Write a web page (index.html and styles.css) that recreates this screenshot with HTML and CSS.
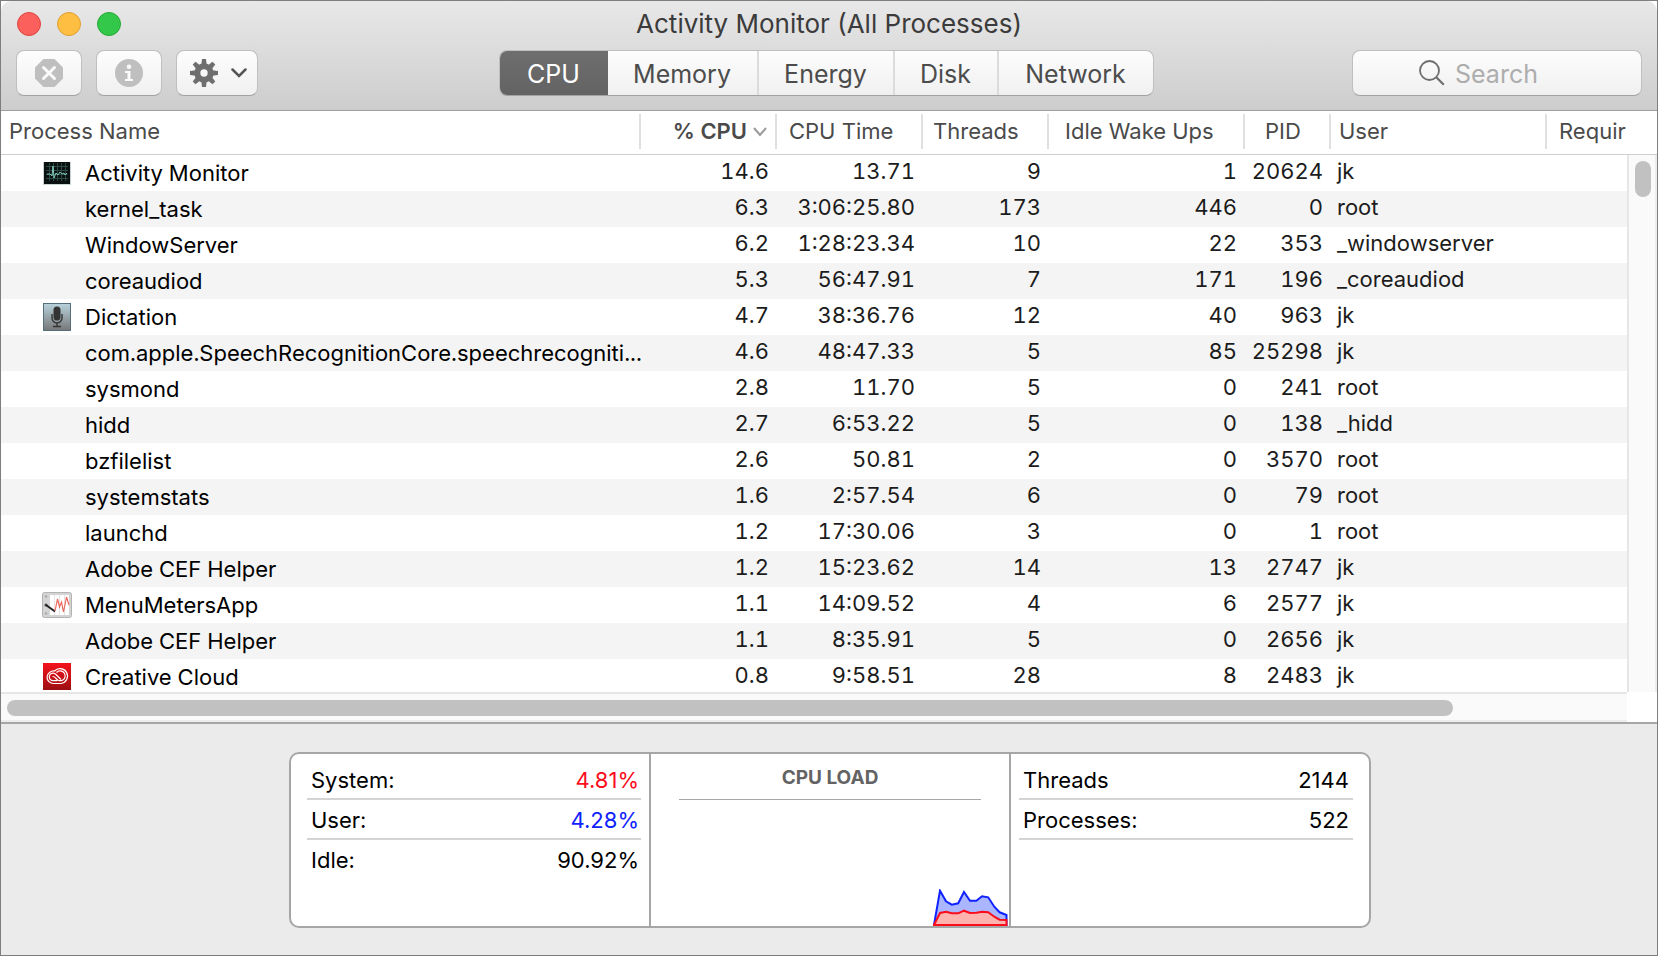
FILE: index.html
```html
<!DOCTYPE html>
<html lang="en">
<head>
<meta charset="utf-8">
<title>Activity Monitor (All Processes)</title>
<link rel="stylesheet" href="styles.css">
</head>
<body>
<div class="window">
  <header class="toolbar">
    <div class="titlebar">
      <div class="lights">
        <button class="light light-close" aria-label="Close"></button>
        <button class="light light-minimize" aria-label="Minimize"></button>
        <button class="light light-zoom" aria-label="Zoom"></button>
      </div>
      <h1 class="title">Activity Monitor (All Processes)</h1>
    </div>
    <div class="controls">
      <div class="actions">
        <button class="tool" aria-label="Stop process">
          <svg width="28" height="28" viewBox="0 0 28 28"><path d="M8.5 0h11L28 8.500v11L19.500 28h-11L0 19.500v-11z" fill="#bfbfbf"/><path d="M8.500 8.500l11 11M19.500 8.500l-11 11" stroke="#fafafa" stroke-width="3" stroke-linecap="round"/></svg>
        </button>
        <button class="tool" aria-label="Process information">
          <svg width="28" height="28" viewBox="0 0 28 28"><circle cx="14" cy="14" r="14" fill="#bfbfbf"/><circle cx="14" cy="7.700" r="2.300" fill="#fafafa"/><path d="M10 12h5.500v8H18v2H10v-2h2.500v-6H10z" fill="#fafafa"/></svg>
        </button>
        <button class="tool tool-menu" aria-label="Options">
          <svg width="28" height="28" viewBox="0 0 28 28"><g fill="#6e6e6e"><path id="tooth" d="M11.300 6L12 0h4l.7 6zM11.300 22l.7 6h4l.7-6z"/><use href="#tooth" transform="rotate(45 14 14)"/><use href="#tooth" transform="rotate(90 14 14)"/><use href="#tooth" transform="rotate(135 14 14)"/></g><circle cx="14" cy="14" r="6.700" fill="none" stroke="#6e6e6e" stroke-width="6"/></svg>
          <svg width="16" height="10" viewBox="0 0 16 10"><path d="M1.500 1.500L8 8l6.500-6.500" fill="none" stroke="#555" stroke-width="2.500" stroke-linecap="round"/></svg>
        </button>
      </div>
      <nav class="segments" aria-label="Resource">
        <button class="segment segment-on" aria-pressed="true">CPU</button>
        <button class="segment segment-memory">Memory</button>
        <button class="segment segment-energy">Energy</button>
        <button class="segment segment-disk">Disk</button>
        <button class="segment segment-network">Network</button>
      </nav>
      <label class="search">
        <svg width="26" height="26" viewBox="0 0 26 26" fill="none" stroke="#6e6e6e"><circle cx="10.500" cy="10.500" r="9.500" stroke-width="1.800"/><path d="M17.500 17.500l7.300 7.300" stroke-width="2.200"/></svg>
        <input class="search-input" type="search" placeholder="Search" aria-label="Search">
      </label>
    </div>
  </header>

  <main class="list">
    <div class="list-body">
      <table class="processes">
        <colgroup>
          <col><col class="col-cpu"><col class="col-time"><col class="col-threads"><col class="col-idle"><col class="col-pid"><col class="col-user"><col class="col-extra">
        </colgroup>
        <thead>
          <tr>
            <th class="h-name" scope="col"><div class="head">Process Name</div></th>
            <th class="h-cpu" scope="col"><div class="head">% CPU<svg width="14" height="10" viewBox="0 0 14 10"><path d="M1 1l6 7 6-7" fill="none" stroke="#999" stroke-width="2"/></svg></div></th>
            <th class="h-time" scope="col"><div class="head">CPU Time</div></th>
            <th class="h-threads" scope="col"><div class="head">Threads</div></th>
            <th class="h-idle" scope="col"><div class="head">Idle Wake Ups</div></th>
            <th class="h-pid" scope="col"><div class="head">PID</div></th>
            <th class="h-user" scope="col"><div class="head">User</div></th>
            <th class="h-extra" scope="col"><div class="head">Requir</div></th>
          </tr>
        </thead>
        <tbody>
          <tr><td class="name"><div class="proc"><span class="icon"><svg width="30" height="28" viewBox="0 0 30 28"><rect x="1" y="3" width="28" height="23" fill="#c9d3d3"/><rect x="2" y="3" width="26" height="22" fill="#0b1110"/><path d="M4 7.500h22M4 11.500h22M4 15.500h22M4 19.500h22M7.500 4v18M11.500 4v18M15.500 4v18M19.500 4v18M23.500 4v18" stroke="#294a43"/><path d="M5 15h3l2 2 1-10 1 12 2-5 2 2 2-3 2 2 2-1 1 2 2-2" fill="none" stroke="#7fc8b8" stroke-width="1"/></svg></span><span class="label">Activity Monitor</span></div></td><td>14.6</td><td>13.71</td><td>9</td><td>1</td><td>20624</td><td class="user">jk</td><td></td></tr>
          <tr><td class="name"><div class="proc"><span class="icon"></span><span class="label">kernel_task</span></div></td><td>6.3</td><td>3:06:25.80</td><td>173</td><td>446</td><td>0</td><td class="user">root</td><td></td></tr>
          <tr><td class="name"><div class="proc"><span class="icon"></span><span class="label">WindowServer</span></div></td><td>6.2</td><td>1:28:23.34</td><td>10</td><td>22</td><td>353</td><td class="user">_windowserver</td><td></td></tr>
          <tr><td class="name"><div class="proc"><span class="icon"></span><span class="label">coreaudiod</span></div></td><td>5.3</td><td>56:47.91</td><td>7</td><td>171</td><td>196</td><td class="user">_coreaudiod</td><td></td></tr>
          <tr><td class="name"><div class="proc"><span class="icon"><svg width="30" height="30" viewBox="0 0 30 30"><defs><linearGradient id="steel" x2="0" y2="1"><stop offset="0" stop-color="#b9d2dc"/><stop offset="1" stop-color="#777"/></linearGradient></defs><rect x="1.500" y="1.500" width="27" height="27" fill="url(#steel)" stroke="#566f7c"/><rect x="11.500" y="4.500" width="7" height="14" rx="3.500" fill="#333"/><path d="M10 12v4a5 5 0 0 0 10 0v-4M15 21v3.500M11 24.500h8" fill="none" stroke="#333" stroke-width="1.400"/></svg></span><span class="label">Dictation</span></div></td><td>4.7</td><td>38:36.76</td><td>12</td><td>40</td><td>963</td><td class="user">jk</td><td></td></tr>
          <tr><td class="name"><div class="proc"><span class="icon"></span><span class="label">com.apple.SpeechRecognitionCore.speechrecogniti...</span></div></td><td>4.6</td><td>48:47.33</td><td>5</td><td>85</td><td>25298</td><td class="user">jk</td><td></td></tr>
          <tr><td class="name"><div class="proc"><span class="icon"></span><span class="label">sysmond</span></div></td><td>2.8</td><td>11.70</td><td>5</td><td>0</td><td>241</td><td class="user">root</td><td></td></tr>
          <tr><td class="name"><div class="proc"><span class="icon"></span><span class="label">hidd</span></div></td><td>2.7</td><td>6:53.22</td><td>5</td><td>0</td><td>138</td><td class="user">_hidd</td><td></td></tr>
          <tr><td class="name"><div class="proc"><span class="icon"></span><span class="label">bzfilelist</span></div></td><td>2.6</td><td>50.81</td><td>2</td><td>0</td><td>3570</td><td class="user">root</td><td></td></tr>
          <tr><td class="name"><div class="proc"><span class="icon"></span><span class="label">systemstats</span></div></td><td>1.6</td><td>2:57.54</td><td>6</td><td>0</td><td>79</td><td class="user">root</td><td></td></tr>
          <tr><td class="name"><div class="proc"><span class="icon"></span><span class="label">launchd</span></div></td><td>1.2</td><td>17:30.06</td><td>3</td><td>0</td><td>1</td><td class="user">root</td><td></td></tr>
          <tr><td class="name"><div class="proc"><span class="icon"></span><span class="label">Adobe CEF Helper</span></div></td><td>1.2</td><td>15:23.62</td><td>14</td><td>13</td><td>2747</td><td class="user">jk</td><td></td></tr>
          <tr><td class="name"><div class="proc"><span class="icon"><svg width="30" height="28" viewBox="0 0 30 28"><rect x=".5" y="1.500" width="29" height="25" rx="2" fill="#d4d4d4" stroke="#b3b3b3"/><rect x="8" y="4" width="19" height="20" fill="#fff"/><path d="M12.500 4v20M17.500 4v20M22.500 4v20" stroke="#e4e4e4"/><circle cx="4" cy="5.500" r="1.300" fill="#aaa"/><circle cx="4" cy="22.500" r="1.300" fill="#aaa"/><circle cx="4" cy="14" r="1.600" fill="#444"/><path d="M4 14l9 6.500" stroke="#222" stroke-width="2"/><path d="M13 20l2.500-12 2 8 2-5 2 10 3-15 2.500 8" fill="none" stroke="#f0685c" stroke-width="1.200"/></svg></span><span class="label">MenuMetersApp</span></div></td><td>1.1</td><td>14:09.52</td><td>4</td><td>6</td><td>2577</td><td class="user">jk</td><td></td></tr>
          <tr><td class="name"><div class="proc"><span class="icon"></span><span class="label">Adobe CEF Helper</span></div></td><td>1.1</td><td>8:35.91</td><td>5</td><td>0</td><td>2656</td><td class="user">jk</td><td></td></tr>
          <tr><td class="name"><div class="proc"><span class="icon"><svg width="30" height="30" viewBox="0 0 30 30"><defs><linearGradient id="cloud" x2="0" y2="1"><stop offset="0" stop-color="#f5121c"/><stop offset="1" stop-color="#9c0f12"/></linearGradient></defs><rect x="1" y="1" width="28" height="27" fill="url(#cloud)"/><g fill="none" stroke="#fff" stroke-width="1.200"><path d="M11 21.500h8a7.500 7.500 0 1 0-6.500-12.500A6.800 6.800 0 0 0 5 15a6.500 6.500 0 0 0 6 6.500z"/><path d="M16.500 18.700L13.500 16a3.500 3.500 0 0 0-3-1.500M15 18.700h-4a3.800 3.800 0 1 1 3-6.200l5 5"/><path d="M14.500 10.500a5 5 0 1 1 5 8.200h-3"/></g></svg></span><span class="label">Creative Cloud</span></div></td><td>0.8</td><td>9:58.51</td><td>28</td><td>8</td><td>2483</td><td class="user">jk</td><td></td></tr>
        </tbody>
      </table>
      <div class="vscroll">
        <div class="vscroll-head"></div>
        <div class="vscroll-track"><div class="vscroll-thumb"></div></div>
      </div>
    </div>
    <div class="hscroll">
      <div class="hscroll-track"><div class="hscroll-thumb" style="width: 89.6%"></div></div>
    </div>
  </main>

  <footer class="footer">
    <div class="summary">
      <dl class="stats stats-left">
        <div class="stat"><dt>System:</dt><dd class="red">4.81%</dd></div>
        <div class="stat"><dt>User:</dt><dd class="blue">4.28%</dd></div>
        <div class="stat stat-plain"><dt>Idle:</dt><dd>90.92%</dd></div>
      </dl>
      <section class="load">
        <h2 class="load-title">CPU LOAD</h2>
        <svg class="graph" width="75" height="37" viewBox="0 0 75 37" stroke-width="2">
          <path d="M1 36L7 1.700l6 10.600 5.800 3.400 6.400-1.400L31 3l6 8.700h6.400L49 7.300l6.200 1 6.100 9.400 5.300 5.600L73.500 26v10z" fill="#aab6ff" stroke="#0f22ff"/>
          <path d="M1 36l6-12 6-1.300 5.800 1.600h6.400l5.800-2.600 6 2.300 6.400-.3 5.600-1 6.200.6 6.100 4.400 5.300 3 6.900.3v5z" fill="#ffb3ae" stroke="#fb0d1b"/>
        </svg>
      </section>
      <dl class="stats stats-right">
        <div class="stat"><dt>Threads</dt><dd>2144</dd></div>
        <div class="stat"><dt>Processes:</dt><dd>522</dd></div>
      </dl>
    </div>
  </footer>
</div>
</body>
</html>
```
FILE: styles.css
```css
* { box-sizing: border-box; }
body {
  margin: 0;
  background: #fff;
  color: #000;
  font-family: Inter, Roboto, "Liberation Sans", sans-serif;
  font-size: 22px;
}
h1, h2, dl, dd { margin: 0; }
button { font: inherit; padding: 0; }
svg { display: block; flex: none; }

.window {
  display: flex;
  flex-direction: column;
  height: 100vh;
  border: 1px solid #7f7d80;
}

/* Toolbar */
.toolbar {
  flex: none;
  padding: 2px 15px 14px;
  border-bottom: 1px solid #9f9f9f;
  border-radius: 10px 10px 0 0;
  background: linear-gradient(#e8e8e8, #cdcdcd);
}
.titlebar {
  display: grid;
  grid-template-columns: 1fr auto 1fr;
  align-items: center;
  height: 42px;
  margin-bottom: 5px;
}
.lights { display: flex; gap: 16px; padding-left: 1px; }
.light {
  width: 24px;
  height: 24px;
  border: 1px solid;
  border-radius: 50%;
}
.light-close { background: #fc605c; border-color: #e0443f; }
.light-minimize { background: #fdbe41; border-color: #dfa032; }
.light-zoom { background: #34c84a; border-color: #27a938; }
.title {
  color: #3b3b3b;
  font-size: 26px;
  font-weight: 400;
  line-height: 42px;
}
.controls {
  display: grid;
  grid-template-columns: 1fr auto 1fr;
  align-items: center;
}
.actions { display: flex; gap: 14px; }
.tool, .search, .segments {
  height: 46px;
  border: 1px solid #bfbfbf;
  border-bottom-color: #a2a2a2;
  border-radius: 8px;
  background: linear-gradient(#fdfdfd, #f0f0f0);
}
.tool {
  display: flex;
  align-items: center;
  justify-content: center;
  width: 66px;
}
.tool-menu { width: 82px; gap: 13px; padding-left: 3px; }
.segments { display: flex; margin-right: 6px; overflow: hidden; }
.segment {
  padding-top: 2px;
  border: 0;
  border-left: 2px solid #dcdcdc;
  background: none;
  color: #4c4c4c;
  font-size: 25px;
}
.segment-on {
  width: 108px;
  border: 0;
  background: linear-gradient(#6e6e6e, #636363);
  color: #fff;
}
.segment-memory { width: 149px; border-left: 0; }
.segment-energy { width: 136px; }
.segment-disk { width: 104px; }
.segment-network { width: 156px; }
.search {
  display: flex;
  align-items: center;
  justify-content: center;
  justify-self: end;
  gap: 10px;
  width: 290px;
}
.search-input {
  width: 120px;
  padding: 2px 0 0;
  border: 0;
  outline: 0;
  background: none;
  font: inherit;
  font-size: 25px;
}
.search-input::placeholder { color: #adadad; opacity: 1; }

/* Process list */
.list {
  display: flex;
  flex: 1 1 0;
  flex-direction: column;
  min-height: 0;
}
.list-body {
  display: flex;
  align-items: flex-start;
  flex: 1 1 0;
  min-height: 0;
  overflow: hidden;
}
.processes {
  flex: 1;
  width: 0;
  table-layout: fixed;
  border-collapse: separate;
  border-spacing: 0;
}
.col-cpu { width: 136px; }
.col-time { width: 146px; }
.col-threads { width: 126px; }
.col-idle { width: 196px; }
.col-pid { width: 86px; }
.col-user { width: 216px; }
.col-extra { width: 80px; }
.processes th {
  height: 44px;
  padding: 3px 0 5px;
  border-bottom: 1px solid #cfcfcf;
  color: #4a4a4a;
  font-weight: 400;
  text-align: left;
  white-space: nowrap;
}
.head {
  height: 35px;
  border-right: 2px solid #e0e0e0;
  line-height: 35px;
}
.h-name .head { padding-left: 8px; }
.h-cpu .head {
  display: flex;
  align-items: center;
  justify-content: flex-end;
  gap: 6px;
  padding-right: 8px;
  font-weight: 600;
}
.h-time .head { padding-left: 12px; }
.h-threads .head { padding-left: 10px; }
.h-idle .head { padding-left: 16px; }
.h-pid .head { padding-left: 20px; }
.h-user .head { padding-left: 8px; }
.h-extra .head { padding-left: 12px; border-right: 0; }
.processes td {
  height: 36px;
  padding: 0 8px 4px 0;
  color: #1c1c1c;
  line-height: 32px;
  font-variant-numeric: tabular-nums;
  text-align: right;
  white-space: nowrap;
}
.processes tbody tr:nth-child(even) { background: #f4f4f4; }
.processes .name { padding: 0; color: #000; text-align: left; }
.processes .user { padding-left: 6px; text-align: left; }
.proc {
  display: flex;
  align-items: center;
  gap: 13px;
  height: 36px;
  padding-left: 41px;
}
.icon { flex: none; width: 30px; }

/* Scroll bars */
.vscroll {
  display: flex;
  flex: none;
  flex-direction: column;
  align-self: stretch;
  width: 30px;
}
.vscroll-head { height: 44px; border-bottom: 1px solid #cfcfcf; }
.vscroll-track {
  flex: 1;
  padding: 6px 4px 6px 6px;
  border-left: 2px solid #e6e6e6;
  border-right: 2px solid #ededed;
  background: #fafafa;
}
.vscroll-thumb { height: 36px; border-radius: 8px; background: #c1c1c1; }
.hscroll { flex: none; padding-right: 30px; }
.hscroll-track {
  height: 30px;
  padding: 6px;
  border-top: 2px solid #e6e6e6;
  border-bottom: 2px solid #ededed;
  background: #fafafa;
}
.hscroll-thumb {
  height: 16px;
  border-radius: 8px;
  background: #c1c1c1;
}

/* Summary */
.footer {
  flex: none;
  padding: 28px 19px 27px 21px;
  border-top: 2px solid #a6a6a6;
  background: #ebebeb;
}
.summary {
  display: grid;
  grid-template-columns: 360px 360px 358px;
  width: fit-content;
  min-height: 176px;
  margin: 0 auto;
  border: 2px solid #a6a6a6;
  border-radius: 10px;
  background: #fff;
}
.stats { padding-top: 6px; }
.stats-left { padding-left: 16px; padding-right: 8px; border-right: 2px solid #a6a6a6; }
.stats-left dd { margin-right: -2px; }
.stats-right { padding-left: 8px; padding-right: 16px; }
.stat {
  display: flex;
  justify-content: space-between;
  height: 40px;
  padding: 0 4px;
  border-bottom: 2px solid #d4d4d4;
  line-height: 40px;
}
.stat-plain { border-bottom: 0; }
.red { color: #fb0d1b; }
.blue { color: #0f22ff; }
.load {
  display: flex;
  flex-direction: column;
  justify-content: space-between;
  border-right: 2px solid #a6a6a6;
}
.load-title {
  margin: 0 28px;
  height: 46px;
  border-bottom: 1px solid #a6a6a6;
  color: #636363;
  font-size: 19px;
  font-weight: 700;
  line-height: 48px;
  text-align: center;
}
.graph { align-self: flex-end; margin-right: 1px; }
```
